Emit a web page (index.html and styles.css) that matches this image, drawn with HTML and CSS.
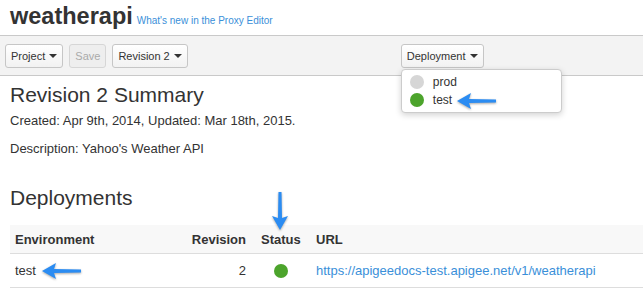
FILE: index.html
```html
<!DOCTYPE html>
<html lang="en">
<head>
  <meta charset="UTF-8">
  <title>weatherapi</title>
  <link rel="stylesheet" href="styles.css">
</head>
<body>
  <header class="top">
    <h1>weatherapi</h1>
    <a href="#" class="whats-new">What's new in the Proxy Editor</a>
  </header>

  <div class="toolbar">
    <button class="btn">Project <span class="caret"></span></button>
    <button class="btn" disabled>Save</button>
    <button class="btn">Revision 2 <span class="caret"></span></button>
    <div class="deploy">
      <button class="btn">Deployment <span class="caret"></span></button>
      <ul class="menu">
        <li><span class="dot grey"></span>prod</li>
        <li><span class="dot green"></span>test</li>
      </ul>
      <svg class="arrow arrow-menu" width="44" height="20" viewBox="0 0 44 20">
        <path d="M2 10 L16 2 L14 8 L41 8.5 L41 11.5 L14 12 L16 18 Z" fill="#2b8cf2"/>
      </svg>
    </div>
  </div>

  <main class="content">
    <h2>Revision 2 Summary</h2>
    <p>Created: Apr 9th, 2014, Updated: Mar 18th, 2015.</p>
    <p>Description: Yahoo's Weather API</p>

    <h2 class="deployments">Deployments</h2>
    <table>
      <thead>
        <tr>
          <th class="env">Environment</th>
          <th class="rev">Revision</th>
          <th class="status">
            Status
            <svg class="arrow arrow-down" width="20" height="42" viewBox="0 0 20 42">
              <path d="M10 40 L2 26 L8 28 L8.5 2 L11.5 2 L12 28 L18 26 Z" fill="#2b8cf2"/>
            </svg>
          </th>
          <th>URL</th>
        </tr>
      </thead>
      <tbody>
        <tr>
          <td class="env">
            test
            <svg class="arrow arrow-left" width="44" height="20" viewBox="0 0 44 20">
              <path d="M2 10 L16 2 L14 8 L41 8.5 L41 11.5 L14 12 L16 18 Z" fill="#2b8cf2"/>
            </svg>
          </td>
          <td class="rev">2</td>
          <td class="status"><span class="dot green"></span></td>
          <td><a href="#">https://apigeedocs-test.apigee.net/v1/weatherapi</a></td>
        </tr>
      </tbody>
    </table>
  </main>
</body>
</html>
```

FILE: styles.css
```css
body {
  margin: 0;
  font-family: "Helvetica Neue", "Liberation Sans", Arial, sans-serif;
  color: #333;
  background: #fff;
}
a {
  color: #3a8fd9;
  text-decoration: none;
}
.top {
  display: flex;
  align-items: baseline;
  height: 35px;
  padding-left: 10px;
}
.top h1 {
  margin: 0;
  font-size: 23.5px;
  font-weight: bold;
  line-height: 32px;
  color: #333;
}
.whats-new {
  margin-left: 4px;
  font-size: 10px;
}
.toolbar {
  display: flex;
  align-items: center;
  height: 39px;
  padding-left: 5px;
  background: #f3f3f3;
  border-top: 1px solid #c9c9c9;
  border-bottom: 1px solid #c9c9c9;
  gap: 6px;
}
.btn {
  height: 24px;
  padding: 0 5px;
  font-family: inherit;
  font-size: 11px;
  color: #333;
  background: linear-gradient(#fff, #f2f2f2);
  border: 1px solid #c6c6c6;
  border-radius: 3px;
}
.btn[disabled] {
  color: #aaa;
  background: #eee;
  border-color: #d6d6d6;
}
.caret {
  display: inline-block;
  width: 0;
  height: 0;
  margin-left: 1px;
  vertical-align: 2px;
  border-left: 4px solid transparent;
  border-right: 4px solid transparent;
  border-top: 4px solid #333;
}
.deploy {
  position: relative;
  margin-left: 207px;
}
.menu {
  position: absolute;
  top: 25px;
  left: 0;
  width: 159px;
  margin: 0;
  padding: 3px 0;
  list-style: none;
  background: #fff;
  border: 1px solid #ccc;
  border-radius: 4px;
  box-shadow: 0 2px 6px rgba(0, 0, 0, 0.18);
  font-size: 12px;
}
.menu li {
  display: flex;
  align-items: center;
  height: 18px;
  padding-left: 8px;
}
.menu .dot {
  margin-right: 9px;
}
.dot {
  display: inline-block;
  width: 14px;
  height: 14px;
  border-radius: 50%;
}
.dot.grey {
  background: #d6d6d6;
}
.dot.green {
  background: #4ca42c;
}
.arrow {
  position: absolute;
  filter: drop-shadow(0 1px 1px rgba(0, 0, 0, 0.35));
}
.arrow-menu {
  left: 54px;
  top: 47px;
}
.content {
  padding: 0 0 0 10px;
}
h2 {
  margin: 7px 0 5px;
  font-size: 21px;
  font-weight: normal;
  line-height: 24px;
  color: #333;
}
p {
  margin: 0 0 11px;
  font-size: 13px;
  line-height: 17px;
}
.deployments {
  margin-top: 29px;
  margin-bottom: 15px;
}
table {
  width: 100%;
  border-collapse: collapse;
  font-size: 13px;
}
th {
  position: relative;
  height: 28px;
  padding: 0 5px;
  text-align: left;
  background: #f8f8f8;
  border-bottom: 1px solid #ddd;
}
td {
  position: relative;
  height: 33px;
  padding: 0 5px;
  border-bottom: 1px solid #ddd;
}
th.env, td.env {
  width: 161px;
}
th.rev, td.rev {
  width: 60px;
  text-align: right;
}
th.status, td.status {
  width: 45px;
  padding-left: 10px;
}
td.status .dot {
  display: block;
  margin-left: 13px;
}
.arrow-down {
  left: 19px;
  top: -35px;
}
.arrow-left {
  left: 30px;
  top: 7px;
}
```
